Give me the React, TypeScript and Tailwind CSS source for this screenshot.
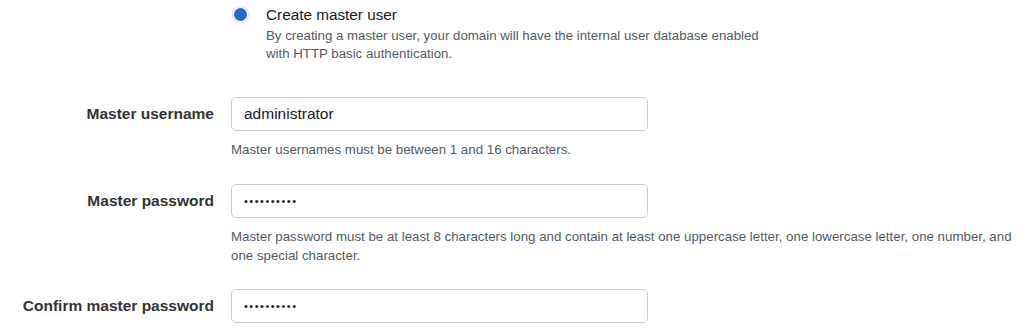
import React from 'react';

const fields = [
  {
    label: 'Master username',
    type: 'text',
    value: 'administrator',
    help: 'Master usernames must be between 1 and 16 characters.',
  },
  {
    label: 'Master password',
    type: 'password',
    value: 'Abcdefgh1!',
    help: 'Master password must be at least 8 characters long and contain at least one uppercase letter, one lowercase letter, one number, and one special character.',
  },
  {
    label: 'Confirm master password',
    type: 'password',
    value: 'Abcdefgh1!',
    help: '',
  },
];

export default function App() {
  return (
    <div className="w-[1028px] h-[333px] overflow-hidden bg-white font-['Liberation_Sans',Arial,sans-serif] text-[#16191f]">
      {/* master user option */}
      <div className="flex gap-[17px] pl-[232px] pt-[5px]">
        <div className="mt-[1px] flex h-[17px] w-[17px] items-center justify-center rounded-full border border-[#d5dbdb] bg-white">
          <div className="h-[13px] w-[13px] rounded-full bg-[#2c6bc6]" />
        </div>
        <div>
          <div className="text-[15.3px] leading-[20px] text-[#16191f]">Create master user</div>
          <p className="mt-[2px] w-[510px] text-[13.25px] leading-[18px] text-[#545b64]">
            By creating a master user, your domain will have the internal user database enabled with HTTP basic
            authentication.
          </p>
        </div>
      </div>

      <div className="mt-[34px] flex flex-col">
        {fields.map((f, i) => (
          <div key={f.label} className={`grid grid-cols-[214px_1fr] ${i === 1 ? 'mt-[25px]' : i === 2 ? 'mt-[24px]' : ''}`}>
            <div className="flex h-[34px] items-center justify-end">
              <label className="text-[15.5px] font-bold text-[#333]">{f.label}</label>
            </div>
            <div>
              <input
                type={f.type}
                readOnly
                defaultValue={f.value}
                className={`ml-[17px] h-[34px] w-[417px] rounded-[5px] border border-[#c8cdd1] bg-white px-[12px] text-[#16191f] outline-none ${
                  f.type === 'password' ? 'text-[11px] tracking-[1.5px] text-[#333]' : 'text-[15.5px]'
                }`}
              />
              {f.help && (
                <p className="ml-[17px] mt-[9px] w-[790px] text-[13.3px] leading-[19px] text-[#545b64]">{f.help}</p>
              )}
            </div>
          </div>
        ))}
      </div>
    </div>
  );
}
